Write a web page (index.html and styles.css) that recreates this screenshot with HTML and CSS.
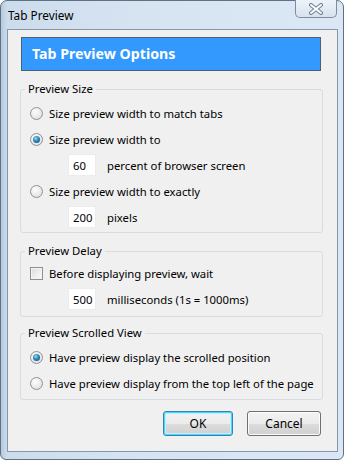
FILE: index.html
```
<!DOCTYPE html>
<html>
<head>
    <meta charset="utf-8">
    <title>Tab Preview</title>
    <link rel="stylesheet" href="styles.css">
</head>
<body>
<div class="window">
    <div class="titlebar">
        <span class="title">Tab Preview</span>
        <span class="close-btn">
            <svg width="16" height="12" viewBox="0 0 16 12">
                <path d="M3 2 L13 10 M13 2 L3 10" stroke="#6f7f90" stroke-width="4" stroke-linecap="round"/>
                <path d="M3 2 L13 10 M13 2 L3 10" stroke="#ffffff" stroke-width="2" stroke-linecap="round"/>
            </svg>
        </span>
    </div>
    <div class="client">
        <div class="banner">Tab Preview Options</div>

        <fieldset class="group group-size">
            <legend>Preview Size</legend>
            <div class="row"><span class="radio"></span><span class="label">Size preview width to match tabs</span></div>
            <div class="row"><span class="radio checked"></span><span class="label">Size preview width to</span></div>
            <div class="row sub"><input class="num" type="text" value="60"><span class="unit">percent of browser screen</span></div>
            <div class="row"><span class="radio"></span><span class="label">Size preview width to exactly</span></div>
            <div class="row sub"><input class="num" type="text" value="200"><span class="unit">pixels</span></div>
        </fieldset>

        <fieldset class="group group-delay">
            <legend>Preview Delay</legend>
            <div class="row"><span class="check"></span><span class="label">Before displaying preview, wait</span></div>
            <div class="row sub"><input class="num" type="text" value="500"><span class="unit">milliseconds (1s = 1000ms)</span></div>
        </fieldset>

        <fieldset class="group group-scroll">
            <legend>Preview Scrolled View</legend>
            <div class="row"><span class="radio checked"></span><span class="label">Have preview display the scrolled position</span></div>
            <div class="row"><span class="radio"></span><span class="label">Have preview display from the top left of the page</span></div>
        </fieldset>

        <div class="buttons">
            <button class="btn btn-default">OK</button>
            <button class="btn">Cancel</button>
        </div>
    </div>
</div>
</body>
</html>
```

FILE: styles.css
```
body {
	margin: 0;
	background: #ffffff;
	font: normal 11.3px "Noto Sans", "Open Sans", sans-serif;
	color: #000000;
}
.window {
	width: 344px;
	height: 460px;
	box-sizing: border-box;
	display: flex;
	flex-direction: column;
	padding: 0 5px 7px 6px;
	border: 1px solid #5f7184;
	border-radius: 7px 7px 6px 6px;
	background: linear-gradient(to right, #b5c9de 0px, #cddcec 6px, #d6e4f2 40%, #dbe7f4 100%);
}
.titlebar {
	height: 28px;
	display: flex;
	align-items: flex-start;
	justify-content: space-between;
}
.title {
	padding: 6px 0 0 1px;
	line-height: 16px;
	font-size: 11.8px;
}
.close-btn {
	width: 42px;
	height: 18px;
	margin: -1px 1px 0 0;
	box-sizing: border-box;
	display: flex;
	align-items: center;
	justify-content: center;
	border: 1px solid #7d8d9e;
	border-top: none;
	border-radius: 0 0 5px 5px;
	background: linear-gradient(#eef3f9, #d7e2ee);
}
.client {
	flex: 1;
	border: 1px solid #8497ab;
	background: #f0f0f0;
	padding-top: 7px;
}
.banner {
	width: 300px;
	height: 34px;
	box-sizing: border-box;
	margin-left: 13px;
	padding-left: 10px;
	border: 1px solid #4e6072;
	background: #3399ff;
	color: #ffffff;
	font-weight: bold;
	font-size: 14.2px;
	line-height: 31px;
}
.group {
	width: 303px;
	box-sizing: border-box;
	margin: 10px 0 0 12px;
	padding: 3px 0 2px 9px;
	border: 1px solid #d5dde3;
	border-radius: 3px;
	min-inline-size: 0;
}
.group legend {
	margin-left: -5px;
	padding: 0 3px;
	line-height: 16px;
}
.group-delay {
	padding-top: 1px;
	padding-bottom: 4px;
}
.group-scroll {
	margin-top: 8px;
	padding-bottom: 3px;
}
.row {
	height: 26px;
	display: flex;
	align-items: center;
	white-space: nowrap;
}
.row.sub {
	padding-left: 38px;
}
.label {
	margin-left: 6px;
}
.unit {
	margin-left: 11px;
}
.radio {
	width: 13px;
	height: 13px;
	box-sizing: border-box;
	border: 1px solid #929292;
	border-radius: 50%;
	background: radial-gradient(circle at 40% 35%, #fdfdfd 0%, #e4e4e4 70%, #d4d4d4 100%);
	display: flex;
	align-items: center;
	justify-content: center;
}
.radio.checked::after {
	content: "";
	width: 7px;
	height: 7px;
	border-radius: 50%;
	background: radial-gradient(circle at 40% 35%, #8fe0f6 0%, #2b87b8 45%, #0b4a75 100%);
}
.check {
	width: 13px;
	height: 13px;
	box-sizing: border-box;
	border: 1px solid #8e8f8f;
	background: linear-gradient(135deg, #dcdcdc, #fbfbfb);
	box-shadow: inset 0 0 0 1px #f4f4f4;
}
.num {
	width: 28px;
	height: 22px;
	box-sizing: border-box;
	margin: 0;
	padding: 0 0 0 4px;
	border: 1px solid #ececec;
	background: #ffffff;
	font: inherit;
	color: #000000;
}
.buttons {
	display: flex;
	justify-content: flex-end;
	gap: 14px;
	margin: 11px 16px 0 0;
}
.btn {
	width: 74px;
	height: 25px;
	box-sizing: border-box;
	padding: 0;
	border: 1px solid #707070;
	border-radius: 3px;
	background: linear-gradient(#f2f2f2 0%, #ebebeb 50%, #dddddd 51%, #cfcfcf 100%);
	box-shadow: inset 0 0 0 1px #fcfcfc;
	font: inherit;
	font-size: 12px;
	color: #000000;
}
.btn-default {
	width: 70px;
	border-color: #3c7fb1;
	box-shadow: inset 0 0 0 1px #48d8fb, inset 0 0 0 2px #bfeefc;
}
```
